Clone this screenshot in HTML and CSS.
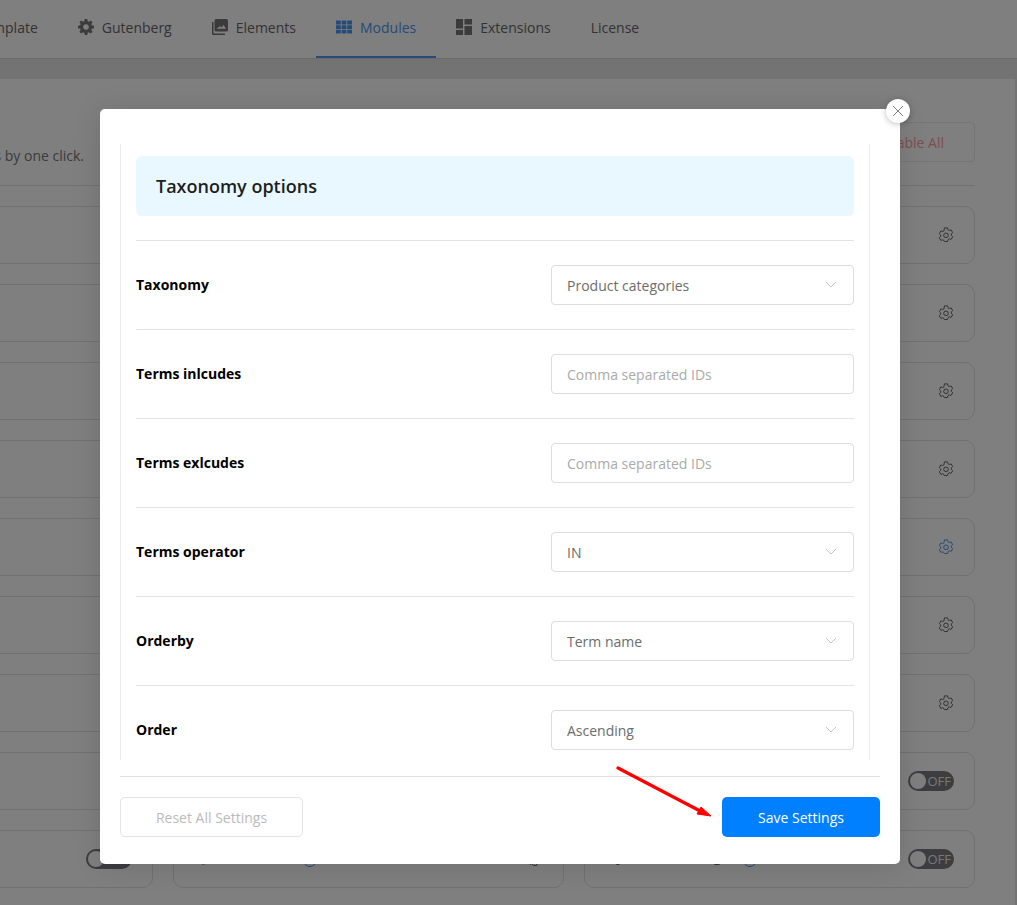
FILE: index.html
```html
<!DOCTYPE html>
<html lang="en">
<head>
<meta charset="utf-8">
<title>Modules</title>
<link rel="stylesheet" href="styles.css">
</head>
<body>
<svg class="defs" width="0" height="0" aria-hidden="true">
  <symbol id="gear" viewBox="0 0 16 16">
    <path fill="none" stroke="currentColor" stroke-width="1" stroke-linejoin="round" d="M6.400.9h3.200l.4 1.900 1.300.7 1.800-.6 1.600 2.700-1.400 1.300v1.500l1.400 1.300-1.600 2.700-1.800-.6-1.300.8-.4 1.900H6.400L6 13.600l-1.300-.8-1.800.6-1.600-2.700 1.400-1.300V7.900L1.300 6.600l1.600-2.700 1.800.6L6 3.800z"/>
    <circle cx="8" cy="8.300" r="2.300" fill="none" stroke="currentColor" stroke-width="1"/>
  </symbol>
</svg>

<div class="page">
  <nav class="tabs">
    <span class="tab tab-first">Template</span>
    <span class="tab"><svg class="tab-icon" viewBox="0 0 16 16"><path fill="currentColor" fill-rule="evenodd" d="M6.700 0h2.600l.4 2.200 1.200.5 1.900-1.300 1.800 1.800-1.300 1.900.5 1.200 2.200.4v2.600l-2.200.4-.5 1.200 1.300 1.900-1.800 1.800-1.900-1.300-1.200.5-.4 2.200H6.700l-.4-2.200-1.200-.5-1.900 1.300-1.800-1.800 1.300-1.900-.5-1.200L0 9.300V6.700l2.200-.4.5-1.200-1.300-1.900 1.800-1.800 1.900 1.300 1.200-.5zM8 5.200a2.800 2.800 0 1 0 0 5.600 2.800 2.800 0 0 0 0-5.600z"/></svg>Gutenberg</span>
    <span class="tab"><svg class="tab-icon" viewBox="0 0 16 16"><path fill="currentColor" fill-rule="evenodd" d="M4 0h10.500A1.500 1.500 0 0 1 16 1.500V11a1.500 1.500 0 0 1-1.500 1.500H4A1.500 1.500 0 0 1 2.500 11V1.500A1.500 1.500 0 0 1 4 0zm.5 9.800h9.500L11.600 6 9.500 8.600 8 7.200zM0 3h1.500v11c0 .3.200.5.500.5h11V16H1.500A1.500 1.500 0 0 1 0 14.500z"/></svg>Elements</span>
    <span class="tab tab-active"><svg class="tab-icon" viewBox="0 0 16 16"><path fill="currentColor" d="M0 1.500h4.800v4H0zM5.600 1.500h4.800v4H5.600zM11.200 1.500H16v4h-4.800zM0 6.300h4.800v3.700H0zM5.600 6.300h4.800v3.700H5.600zM11.200 6.300H16v3.700h-4.800zM0 10.800h4.800v3.700H0zM5.600 10.800h4.800v3.700H5.600zM11.200 10.800H16v3.700h-4.800z"/></svg>Modules</span>
    <span class="tab"><svg class="tab-icon" viewBox="0 0 16 16"><path fill="currentColor" d="M0 0h7v9.500H0zM8.500 0H16v5.500H8.500zM8.500 7H16v9H8.500zM0 11h7v5H0z"/></svg>Extensions</span>
    <span class="tab">License</span>
  </nav>
  <div class="strip"></div>
  <main class="content">
    <header class="intro">
      <p class="intro-text"><span>Enable or disable modules by one click.</span></p>
      <span class="disable-all">Disable All</span>
    </header>
    <div class="grid">
      <div class="card"></div><div class="card"></div>
      <div class="card"><svg class="gear"><use href="#gear"/></svg></div>
      <div class="card"></div><div class="card"></div>
      <div class="card"><svg class="gear"><use href="#gear"/></svg></div>
      <div class="card"></div><div class="card"></div>
      <div class="card"><svg class="gear"><use href="#gear"/></svg></div>
      <div class="card"></div><div class="card"></div>
      <div class="card"><svg class="gear"><use href="#gear"/></svg></div>
      <div class="card"></div><div class="card"></div>
      <div class="card"><svg class="gear gear-on"><use href="#gear"/></svg></div>
      <div class="card"></div><div class="card"></div>
      <div class="card"><svg class="gear"><use href="#gear"/></svg></div>
      <div class="card"></div><div class="card"></div>
      <div class="card"><svg class="gear"><use href="#gear"/></svg></div>
      <div class="card"></div><div class="card"></div>
      <div class="card"><span class="toggle"><span class="knob"></span>OFF</span></div>
      <div class="card"><span class="toggle"><span class="knob"></span>OFF</span></div>
      <div class="card"><span class="card-label">Quick Views</span><span class="help"></span><svg class="gear"><use href="#gear"/></svg></div>
      <div class="card"><span class="card-label">Dynamic Pricing</span><span class="help"></span><span class="toggle"><span class="knob"></span>OFF</span></div>
    </div>
  </main>
</div>

<div class="overlay"></div>

<section class="modal">
  <button class="close" type="button" aria-label="Close"><svg viewBox="0 0 12 12"><path d="M1 1l10 10M11 1L1 11" fill="none" stroke="currentColor" stroke-width="1"/></svg></button>
  <div class="modal-scroll">
    <h2 class="section-title">Taxonomy options</h2>
    <div class="row">
      <label class="row-label">Taxonomy</label>
      <div class="field"><span>Product categories</span><svg class="chev" viewBox="0 0 12 7"><path d="M1 1l5 5 5-5" fill="none" stroke="currentColor"/></svg></div>
    </div>
    <div class="row">
      <label class="row-label">Terms inlcudes</label>
      <div class="field field-empty"><span>Comma separated IDs</span></div>
    </div>
    <div class="row">
      <label class="row-label">Terms exlcudes</label>
      <div class="field field-empty"><span>Comma separated IDs</span></div>
    </div>
    <div class="row">
      <label class="row-label">Terms operator</label>
      <div class="field"><span>IN</span><svg class="chev" viewBox="0 0 12 7"><path d="M1 1l5 5 5-5" fill="none" stroke="currentColor"/></svg></div>
    </div>
    <div class="row">
      <label class="row-label">Orderby</label>
      <div class="field"><span>Term name</span><svg class="chev" viewBox="0 0 12 7"><path d="M1 1l5 5 5-5" fill="none" stroke="currentColor"/></svg></div>
    </div>
    <div class="row">
      <label class="row-label">Order</label>
      <div class="field"><span>Ascending</span><svg class="chev" viewBox="0 0 12 7"><path d="M1 1l5 5 5-5" fill="none" stroke="currentColor"/></svg></div>
    </div>
  </div>
  <footer class="modal-footer">
    <button class="btn btn-reset" type="button">Reset All Settings</button>
    <button class="btn btn-save" type="button">Save Settings</button>
  </footer>
</section>

<svg class="arrow" viewBox="0 0 100 60"><path d="M2 2L86 46" stroke="#ff0000" stroke-width="3.200" stroke-linecap="round" fill="none"/><path d="M95 50L81 48 85 41z" fill="#ff0000" stroke="#ff0000" stroke-width="1"/></svg>
</body>
</html>
```
FILE: styles.css
```css
* { box-sizing: border-box; }
html, body { margin: 0; height: 905px; overflow: hidden; }
body { font-family: "Open Sans", "Noto Sans", sans-serif; font-size: 14px; color: #23282d; background: #fff; position: relative; }
.defs { position: absolute; }

.page { width: 1017px; height: 905px; overflow: hidden; background: #e6e6e6; }
.tabs { display: flex; height: 59px; background: #fff; align-items: flex-start; margin-left: -38.5px; border-bottom: 1px solid #d4d4d4; }
.tab { display: flex; align-items: center; gap: 8px; padding: 0 20px 2px; font-size: 14px; color: #666; height: 58px; border-bottom: 2px solid transparent; }
.tab-first { padding-left: 15px; padding-right: 20px; }
.tab-icon { width: 16px; height: 16px; color: #777; }
.tab-active { color: #4a96f0; border-bottom-color: #4a96f0; }
.tab-active .tab-icon { color: #4a96f0; }
.strip { height: 20px; background: #e6e6e6; }
.content { width: 1015px; height: 826px; padding: 0 40px 0 0; background: #fff; }
.intro { display: flex; justify-content: space-between; align-items: flex-start; height: 107px; border-bottom: 1px solid #e2e2e2; margin-bottom: 20px; }
.intro-text { margin: 67px 0 0; width: 84px; flex: none; display: flex; justify-content: flex-end; font-size: 14px; line-height: 19px; color: #777; white-space: nowrap; }
.disable-all { margin-top: 43px; border: 1px solid #ececec; border-radius: 4px; height: 40px; padding: 0 30px; display: flex; align-items: center; color: #f8a0a0; font-size: 14px; }
.grid { display: grid; grid-template-columns: repeat(3, 391px); gap: 20px; margin-left: -238px; grid-auto-rows: 58px; }
.card { border: 1px solid #e2e2e2; border-radius: 10px; display: flex; align-items: center; justify-content: flex-end; padding: 0 20px; }
.card-label { font-size: 15px; font-weight: 600; color: #666; margin: 0 22px 6px 0; white-space: nowrap; }
.help { width: 14px; height: 14px; border: 1.500px solid #4a96f0; border-radius: 50%; margin-top: 1px; }
.help + .gear, .help + .toggle { margin-left: auto; }
.gear { width: 16px; height: 16px; color: #666; flex: none; }
.gear-on { color: #4a96f0; }
.toggle { position: relative; width: 46px; height: 20px; border-radius: 10px; background: #7a7a80; color: #eee; font-size: 13px; display: flex; align-items: center; justify-content: flex-end; padding-right: 3px; line-height: 1; }
.knob { position: absolute; left: 2px; top: 2px; width: 16px; height: 16px; border-radius: 50%; background: #fff; }

.overlay { position: absolute; inset: 0; background: rgba(0, 0, 0, .5); }

.modal { position: absolute; left: 100px; top: 109px; width: 800px; height: 755px; background: #fff; border-radius: 5px; box-shadow: 0 2px 30px rgba(0, 0, 0, .12); display: flex; flex-direction: column; padding: 35px 20px 27px; }
.close { position: absolute; right: -10px; top: -10px; width: 24px; height: 24px; border: 0; border-radius: 50%; padding: 6px; background: #fff; color: #7a7f87; box-shadow: 0 1px 6px rgba(0, 0, 0, .25); display: flex; }
.close svg { width: 12px; height: 12px; }
.modal-scroll { flex: 1; min-height: 0; overflow: hidden; padding: 12px 15px 0; border-left: 1px solid #ececec; border-right: 1px solid #ececec; width: 750px; }
.section-title { margin: 0 0 24px; height: 60px; background: #e9f8fe; border-radius: 6px; padding: 0 20px; display: flex; align-items: center; font-size: 18px; font-weight: 600; color: #1e1e1e; }
.row { display: flex; align-items: center; justify-content: space-between; height: 89px; border-top: 1px solid #e2e2e8; }
.row-label { font-size: 14px; font-weight: 700; color: #000; margin-top: -2px; }
.field { width: 303px; height: 40px; border: 1px solid #dcdce4; border-radius: 4px; display: flex; align-items: center; justify-content: space-between; padding: 0 16px 0 15px; color: #6c6c6c; font-size: 14px; }
.field-empty { color: #aaa; }
.chev { width: 12px; height: 7px; color: #c4c4c4; margin-top: -1px; }
.modal-footer { display: flex; justify-content: space-between; align-items: flex-start; border-top: 1px solid #e0e0e0; padding-top: 20px; height: 61px; flex: none; margin-top: 16px; }
.btn { height: 40px; border-radius: 5px; font-family: inherit; font-size: 14px; display: flex; align-items: center; justify-content: center; }
.btn-reset { width: 183px; border: 1px solid #e4e4e4; background: #fff; color: #bbb; }
.btn-save { width: 158px; border: 0; background: #0080ff; color: #fff; }
.arrow { position: absolute; left: 616px; top: 766px; width: 100px; height: 60px; }
```
